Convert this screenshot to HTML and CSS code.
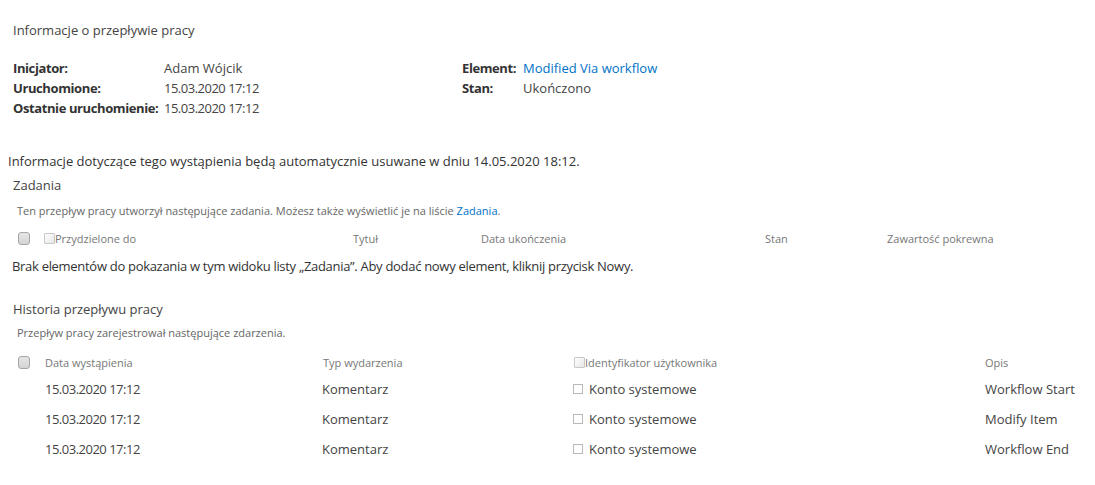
FILE: index.html
```html
<!DOCTYPE html>
<html lang="pl">
<head>
<meta charset="utf-8">
<title>Informacje o przepływie pracy</title>
<link rel="stylesheet" href="styles.css">
</head>
<body>
<div class="page">
  <div class="title">Informacje o przepływie pracy</div>
  <div class="info">
    <div class="info-left">
      <div class="lbl">Inicjator:</div><div class="val">Adam Wójcik</div>
      <div class="lbl">Uruchomione:</div><div class="val num">15.03.2020 17:12</div>
      <div class="lbl">Ostatnie uruchomienie:</div><div class="val num">15.03.2020 17:12</div>
    </div>
    <div class="info-right">
      <div class="lbl">Element:</div><div class="val"><a class="link" href="#">Modified Via workflow</a></div>
      <div class="lbl">Stan:</div><div class="val">Ukończono</div>
    </div>
  </div>

  <div class="notice">Informacje dotyczące tego wystąpienia będą automatycznie usuwane w dniu 14.05.2020 18:12.</div>

  <div class="section-title">Zadania</div>
  <div class="section-desc">Ten przepływ pracy utworzył następujące zadania. Możesz także wyświetlić je na liście <a class="link" href="#">Zadania</a>.</div>
  <div class="tasks-head">
    <div class="cell"><span class="cb"></span></div>
    <div class="cell"><span class="cb-sm"></span>Przydzielone do</div>
    <div class="cell">Tytuł</div>
    <div class="cell">Data ukończenia</div>
    <div class="cell">Stan</div>
    <div class="cell">Zawartość pokrewna</div>
  </div>
  <div class="empty">Brak elementów do pokazania w tym widoku listy „Zadania”. Aby dodać nowy element, kliknij przycisk Nowy.</div>

  <div class="section-title history">Historia przepływu pracy</div>
  <div class="section-desc history-desc">Przepływ pracy zarejestrował następujące zdarzenia.</div>
  <div class="hist-head">
    <div class="cell"><span class="cb"></span></div>
    <div class="cell">Data wystąpienia</div>
    <div class="cell">Typ wydarzenia</div>
    <div class="cell"><span class="cb-sm"></span>Identyfikator użytkownika</div>
    <div class="cell">Opis</div>
  </div>
  <div class="hist-rows">
    <div class="hist-row">
      <div class="cell"></div>
      <div class="cell num">15.03.2020 17:12</div>
      <div class="cell">Komentarz</div>
      <div class="cell"><span class="cb-user"></span>Konto systemowe</div>
      <div class="cell">Workflow Start</div>
    </div>
    <div class="hist-row">
      <div class="cell"></div>
      <div class="cell num">15.03.2020 17:12</div>
      <div class="cell">Komentarz</div>
      <div class="cell"><span class="cb-user"></span>Konto systemowe</div>
      <div class="cell">Modify Item</div>
    </div>
    <div class="hist-row">
      <div class="cell"></div>
      <div class="cell num">15.03.2020 17:12</div>
      <div class="cell">Komentarz</div>
      <div class="cell"><span class="cb-user"></span>Konto systemowe</div>
      <div class="cell">Workflow End</div>
    </div>
  </div>
</div>
</body>
</html>
```

FILE: styles.css
```css
html, body {
  margin: 0;
  padding: 0;
  background: #ffffff;
}
body {
  font-family: "Open Sans", "Noto Sans", sans-serif;
  font-size: 13px;
  color: #444444;
}
.page {
  padding: 20px 0 0 0;
}
.link {
  color: #0072c6;
  text-decoration: none;
}
.num {
  letter-spacing: -0.5px;
}
.title {
  margin-left: 13px;
  line-height: 20px;
  color: #444;
}
.info {
  display: flex;
  margin-top: 18px;
  margin-left: 13px;
}
.info-left {
  display: grid;
  grid-template-columns: 151px auto;
  width: 449px;
  align-content: start;
}
.info-right {
  display: grid;
  grid-template-columns: 61px auto;
  align-content: start;
}
.lbl {
  font-weight: 700;
  color: #333;
  line-height: 20px;
  white-space: nowrap;
  letter-spacing: -0.4px;
}
.val {
  line-height: 20px;
  color: #444;
  white-space: nowrap;
}
.notice {
  margin-top: 33px;
  margin-left: 8px;
  line-height: 20px;
  color: #333;
}
.section-title {
  margin-top: 4px;
  margin-left: 13px;
  line-height: 20px;
  color: #444;
}
.section-title.history {
  margin-top: 23px;
}
.section-desc {
  margin-top: 8px;
  margin-left: 17px;
  font-size: 11px;
  line-height: 16px;
  color: #666;
}
.section-desc.history-desc {
  margin-top: 6px;
}
.tasks-head {
  display: grid;
  grid-template-columns: 26px 309px 128px 284px 122px auto;
  margin-top: 9px;
  margin-left: 18px;
  height: 20px;
  align-items: center;
  font-size: 11px;
  color: #777;
}
.cell {
  display: flex;
  align-items: center;
  white-space: nowrap;
}
.cb {
  display: inline-block;
  box-sizing: border-box;
  width: 12px;
  height: 13px;
  border: 1px solid #a6a6a6;
  border-radius: 3px;
  background: linear-gradient(#e6e6e6, #d4d4d4);
}
.cb-sm {
  display: inline-block;
  box-sizing: border-box;
  width: 11px;
  height: 11px;
  border: 1px solid #c8c8c8;
  border-radius: 1px;
  background: linear-gradient(135deg, #ffffff, #e6e6e6);
  align-self: flex-start;
  margin-top: 2px;
}
.empty {
  margin-top: 8px;
  margin-left: 12px;
  line-height: 20px;
  color: #333;
  letter-spacing: -0.3px;
}
.hist-head {
  display: grid;
  grid-template-columns: 27px 278px 251px 411px auto;
  margin-top: 11px;
  margin-left: 18px;
  height: 20px;
  align-items: center;
  font-size: 11px;
  color: #777;
}
.hist-rows {
  margin-top: 2px;
}
.hist-row {
  display: grid;
  grid-template-columns: 27px 277px 251px 412px auto;
  margin-left: 18px;
  height: 30px;
  align-items: center;
  color: #444;
}
.cb-user {
  display: inline-block;
  box-sizing: border-box;
  width: 10px;
  height: 10px;
  border: 1px solid #b8b8b8;
  margin-right: 6px;
}
```
